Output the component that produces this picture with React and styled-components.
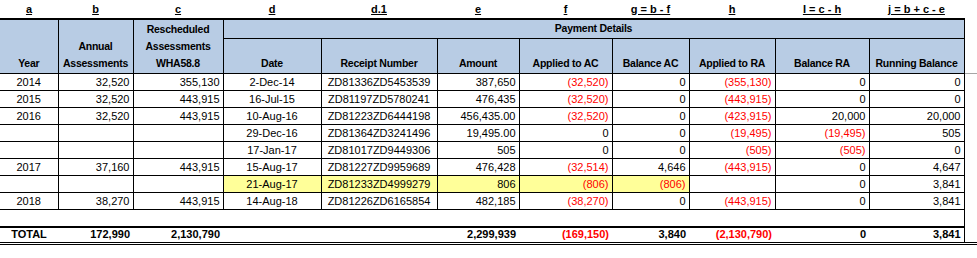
import React from "react";
import styled, { createGlobalStyle } from "styled-components";

const cols = [58, 75, 90, 98, 116, 82, 93, 77, 86, 94, 95, 13];
const letters = ["a", "b", "c", "d", "d.1", "e", "f", "g = b - f", "h", "I = c - h", "j = b + c - e"];
const heads = ["Date", "Receipt Number", "Amount", "Applied to AC", "Balance AC", "Applied to RA", "Balance RA", "Running Balance"];
const align = ["center", "right", "right", "center", "center", "right", "right", "right", "right", "right", "right"];

// "!" prefix marks a red (negative) figure
const rows = [
  { cells: ["2014", "32,520", "355,130", "2-Dec-14", "ZD81336ZD5453539", "387,650", "!(32,520)", "0", "!(355,130)", "0", "0"] },
  { cells: ["2015", "32,520", "443,915", "16-Jul-15", "ZD81197ZD5780241", "476,435", "!(32,520)", "0", "!(443,915)", "0", "0"] },
  { cells: ["2016", "32,520", "443,915", "10-Aug-16", "ZD81223ZD6444198", "456,435.00", "!(32,520)", "0", "!(423,915)", "20,000", "20,000"] },
  { cells: ["", "", "", "29-Dec-16", "ZD81364ZD3241496", "19,495.00", "0", "0", "!(19,495)", "!(19,495)", "505"] },
  { cells: ["", "", "", "17-Jan-17", "ZD81017ZD9449306", "505", "0", "0", "!(505)", "!(505)", "0"] },
  { cells: ["2017", "37,160", "443,915", "15-Aug-17", "ZD81227ZD9959689", "476,428", "!(32,514)", "4,646", "!(443,915)", "0", "4,647"] },
  { cells: ["", "", "", "21-Aug-17", "ZD81233ZD4999279", "806", "!(806)", "!(806)", "", "0", "3,841"], highlight: [3, 4, 5, 6, 7] },
  { cells: ["2018", "38,270", "443,915", "14-Aug-18", "ZD81226ZD6165854", "482,185", "!(38,270)", "0", "!(443,915)", "0", "3,841"] },
];

const totals = ["TOTAL", "172,990", "2,130,790", "", "", "2,299,939", "!(169,150)", "3,840", "!(2,130,790)", "0", "3,841"];

const GlobalStyle = createGlobalStyle`
  body {
    margin: 0;
    background: #fff;
    font-family: "Liberation Sans", Arial, sans-serif;
    color: #000;
  }
`;

const Sheet = styled.table`
  width: 977px;
  table-layout: fixed;
  border-collapse: collapse;
  font-size: 11px;
  line-height: 13px;
`;

const LetterRow = styled.tr`
  height: 19px;
`;

const LetterCell = styled.td`
  padding: 0;
  text-align: center;
  font-weight: bold;
  text-decoration: underline;
  border-bottom: 2px solid #000;
  white-space: nowrap;
`;

const HeadCell = styled.th`
  background: #b8cce4;
  font-weight: bold;
  font-size: 10.5px;
  letter-spacing: -0.25px;
  line-height: 17px;
  padding: 0 0 1px;
  text-align: center;
  vertical-align: ${(p) => (p.$middle ? "middle" : "bottom")};
  border-right: 1px solid #000;
  border-bottom: 1px solid #000;
  white-space: nowrap;
`;

const Gutter = styled.td`
  padding: 0;
  border-bottom: 1px solid #a6a6a6;
`;

const HeadRow = styled.tr`
  height: ${(p) => p.$h}px;
`;

const DataRow = styled.tr`
  height: 17px;
`;

const Cell = styled.td`
  padding: 0 3px;
  text-align: ${(p) => p.$align};
  color: ${(p) => (p.$red ? "#ff0000" : "#000")};
  background: ${(p) => (p.$hl ? "#ffff99" : "transparent")};
  border-right: 1px solid #000;
  border-bottom: 1px solid #000;
  white-space: nowrap;
  overflow: hidden;
`;

const BlankCell = styled.td`
  padding: 0;
  border-right: 1px solid #000;
  border-bottom: 2px solid #000;
`;

const TotalRow = styled.tr`
  height: 17px;
  border-bottom: 3px double #000;
`;

const TotalCell = styled.td`
  padding: 0 3px;
  font-weight: bold;
  text-align: ${(p) => p.$align};
  color: ${(p) => (p.$red ? "#ff0000" : "#000")};
  border-right: ${(p) => (p.$last ? "1px solid #000" : "none")};
  border-bottom: 3px double #000;
  white-space: nowrap;
`;

function value(v) {
  const red = v.startsWith("!");
  return { red, text: red ? v.slice(1) : v };
}

export default function App() {
  return (
    <>
      <GlobalStyle />
      <Sheet>
        <colgroup>
          {cols.map((w, i) => (
            <col key={i} style={{ width: w }} />
          ))}
        </colgroup>
        <tbody>
          <LetterRow>
            {letters.map((l) => (
              <LetterCell key={l}>{l}</LetterCell>
            ))}
          </LetterRow>
          <HeadRow $h={17}>
            <HeadCell rowSpan={2}>Year</HeadCell>
            <HeadCell rowSpan={2}>
              Annual
              <br />
              Assessments
            </HeadCell>
            <HeadCell rowSpan={2}>
              Rescheduled
              <br />
              Assessments
              <br />
              WHA58.8
            </HeadCell>
            <HeadCell colSpan={8} $middle>
              Payment Details
            </HeadCell>
          </HeadRow>
          <HeadRow $h={35}>
            {heads.map((h) => (
              <HeadCell key={h}>{h}</HeadCell>
            ))}
            <Gutter />
          </HeadRow>
          {rows.map((r, ri) => (
            <DataRow key={ri}>
              {r.cells.map((c, ci) => {
                const { red, text } = value(c);
                return (
                  <Cell key={ci} $align={align[ci]} $red={red} $hl={r.highlight && r.highlight.includes(ci)}>
                    {text}
                  </Cell>
                );
              })}
            </DataRow>
          ))}
          <DataRow>
            <BlankCell colSpan={11} />
          </DataRow>
          <TotalRow>
            {totals.map((c, ci) => {
              const { red, text } = value(c);
              return (
                <TotalCell key={ci} $align={ci === 0 ? "center" : "right"} $red={red} $last={ci === 10}>
                  {text}
                </TotalCell>
              );
            })}
          </TotalRow>
        </tbody>
      </Sheet>
    </>
  );
}
